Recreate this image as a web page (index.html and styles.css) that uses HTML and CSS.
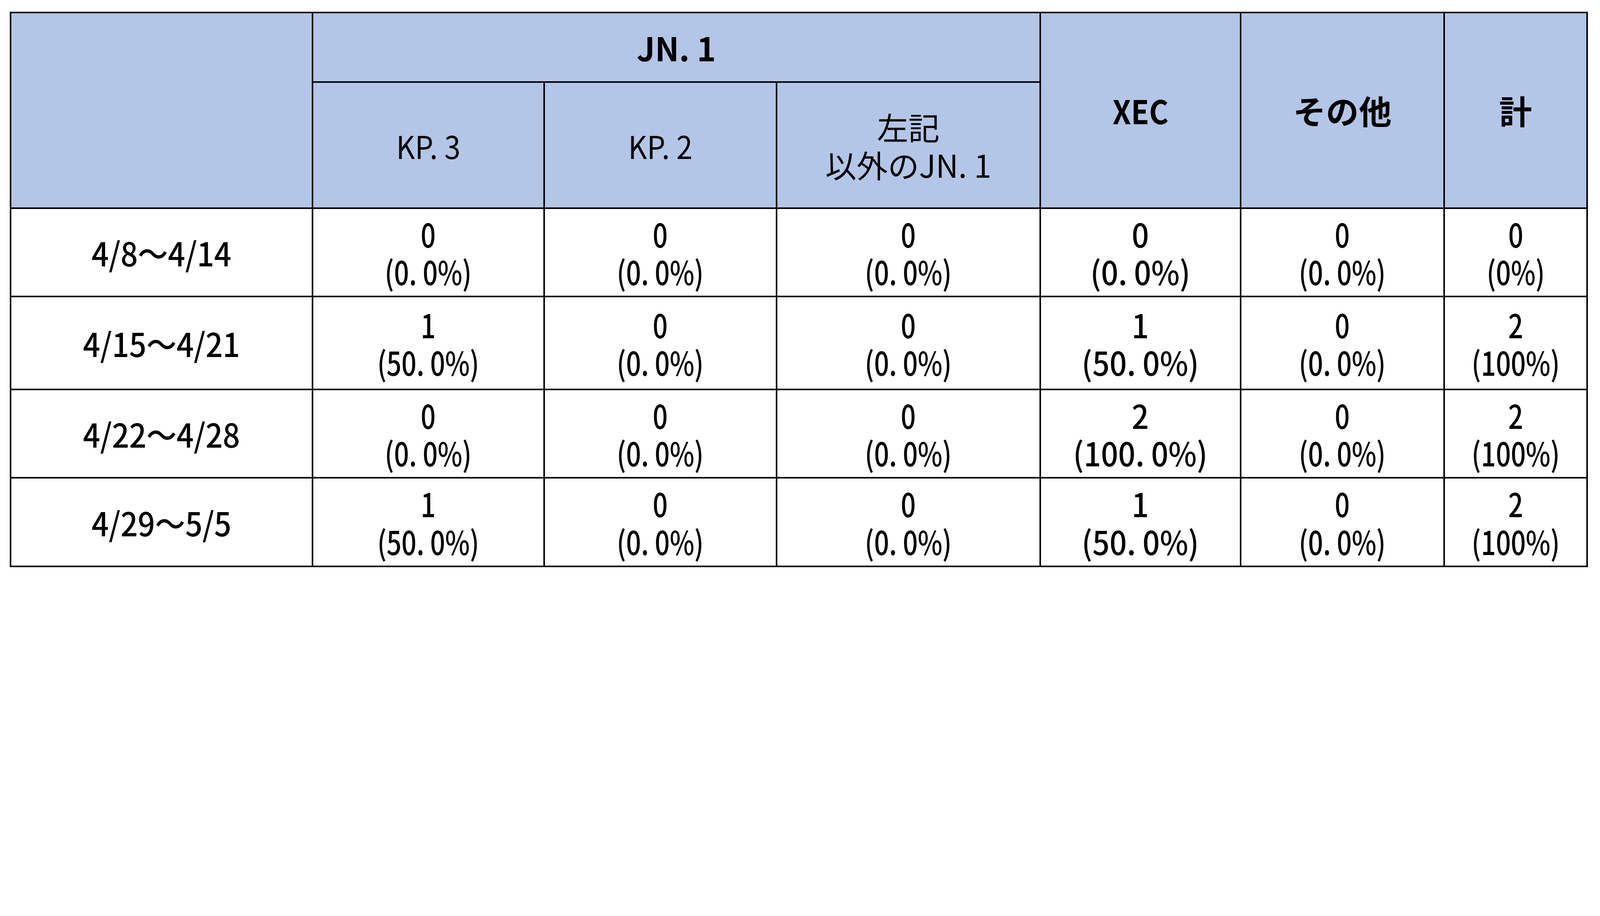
FILE: index.html
```html
<!DOCTYPE html>
<html lang="ja">
<head>
<meta charset="utf-8">
<title>JN.1 系統別検出数</title>
<link rel="stylesheet" href="styles.css">
</head>
<body>
<table class="tbl">
  <colgroup>
    <col class="c-date">
    <col class="c-kp3">
    <col class="c-kp2">
    <col class="c-other-jn">
    <col class="c-xec">
    <col class="c-etc">
    <col class="c-total">
  </colgroup>
  <thead>
    <tr class="h1">
      <th rowspan="2"></th>
      <th colspan="3" class="strong"><span class="lat">JN. 1</span></th>
      <th rowspan="2" class="strong"><span class="lat-x">XEC</span></th>
      <th rowspan="2" class="strong">その他</th>
      <th rowspan="2" class="strong">計</th>
    </tr>
    <tr class="h2">
      <th><span class="lat-k">KP. 3</span></th>
      <th><span class="lat-k">KP. 2</span></th>
      <th>左記<br>以外のJN. 1</th>
    </tr>
  </thead>
  <tbody>
    <tr class="r1">
      <td><span class="date">4/8〜4/14</span></td>
      <td><span class="num">0<br>(0. 0%)</span></td>
      <td><span class="num">0<br>(0. 0%)</span></td>
      <td><span class="num">0<br>(0. 0%)</span></td>
      <td class="xec"><span class="num">0<br>(0. 0%)</span></td>
      <td><span class="num">0<br>(0. 0%)</span></td>
      <td><span class="num">0<br>(0%)</span></td>
    </tr>
    <tr class="r2">
      <td><span class="date">4/15〜4/21</span></td>
      <td><span class="num">1<br>(50. 0%)</span></td>
      <td><span class="num">0<br>(0. 0%)</span></td>
      <td><span class="num">0<br>(0. 0%)</span></td>
      <td class="xec"><span class="num">1<br>(50. 0%)</span></td>
      <td><span class="num">0<br>(0. 0%)</span></td>
      <td><span class="num">2<br>(100%)</span></td>
    </tr>
    <tr class="r3">
      <td><span class="date">4/22〜4/28</span></td>
      <td><span class="num">0<br>(0. 0%)</span></td>
      <td><span class="num">0<br>(0. 0%)</span></td>
      <td><span class="num">0<br>(0. 0%)</span></td>
      <td class="xec"><span class="num">2<br>(100. 0%)</span></td>
      <td><span class="num">0<br>(0. 0%)</span></td>
      <td><span class="num">2<br>(100%)</span></td>
    </tr>
    <tr class="r4">
      <td><span class="date">4/29〜5/5</span></td>
      <td><span class="num">1<br>(50. 0%)</span></td>
      <td><span class="num">0<br>(0. 0%)</span></td>
      <td><span class="num">0<br>(0. 0%)</span></td>
      <td class="xec"><span class="num">1<br>(50. 0%)</span></td>
      <td><span class="num">0<br>(0. 0%)</span></td>
      <td><span class="num">2<br>(100%)</span></td>
    </tr>
  </tbody>
</table>
</body>
</html>
```
FILE: styles.css
```css
html, body {
  margin: 0;
  padding: 0;
  background: #ffffff;
}

body {
  padding: 30px 0 0 25px;
  font-family: "Noto Sans CJK JP", "Noto Sans", sans-serif;
  color: #000000;
}

.tbl {
  border-collapse: collapse;
  table-layout: fixed;
  width: 4040px;
  border: 4.4px solid #000000;
}

.c-date { width: 772.5px; }
.c-kp3 { width: 593.5px; }
.c-kp2 { width: 594.8px; }
.c-other-jn { width: 674.7px; }
.c-xec { width: 513.5px; }
.c-etc { width: 520.5px; }
.c-total { width: 366.2px; }

.tbl th,
.tbl td {
  border: 4.4px solid #000000;
  padding: 0;
  text-align: center;
  vertical-align: middle;
  font-size: 84px;
  line-height: 96.5px;
  font-weight: 400;
  white-space: nowrap;
}

.tbl td {
  font-weight: 500;
}

.tbl th {
  background: #b4c6e7;
}

.tbl th.strong {
  font-weight: 700;
}

.h1 { height: 178.4px; }
.h2 { height: 323.1px; }

.h2 th {
  font-size: 80px;
}

.r1 { height: 226px; }
.r2 { height: 237.4px; }
.r3 { height: 226.6px; }
.r4 { height: 226.6px; }

.num,
.date,
.lat,
.lat-x,
.lat-k {
  display: inline-block;
}

.num { transform: scaleX(0.8); }
.date { transform: scaleX(0.92); }
.lat { transform: scaleX(0.98); }
.lat-x { transform: scaleX(0.9); }
.lat-k { transform: scaleX(0.93); }

.tbl td.xec .num {
  transform: scaleX(0.92);
}
```
